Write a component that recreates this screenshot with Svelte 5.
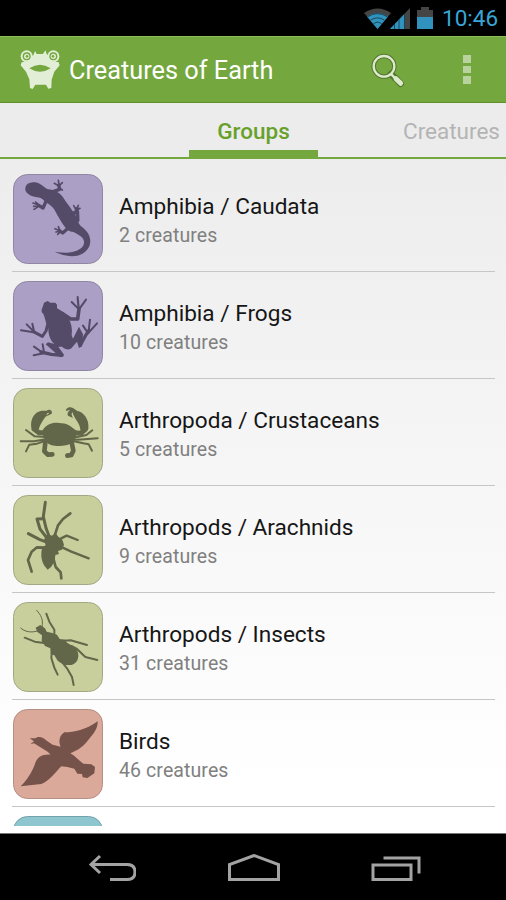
<script lang="ts">
  interface Limb {
    d: string
    w: number
  }

  interface Group {
    name?: string
    count?: number
    tint: 'violet' | 'olive' | 'coral' | 'teal'
    body: string
    limbs: Limb[]
  }

  const groups: Group[] = [
    {
      name: 'Amphibia / Caudata',
      count: 2,
      tint: 'violet',
      body: 'M52 57 C53 44 65 38 82 39 C97 41 107 54 120 60 C139 62 155 69 165 84 C174 99 190 117 202 138 C210 151 209 163 222 173 C242 188 251 207 245 228 C237 249 218 260 192 261 C174 260 157 255 140 247 C158 249 176 252 193 248 C217 243 230 231 228 216 C225 201 209 195 196 188 C184 186 175 181 168 169 C157 154 149 139 140 122 C132 108 117 103 106 92 C96 80 81 87 65 77 C55 71 51 65 52 57 Z',
      limbs: [
        { d: 'M137 66 L155 60 L152 47', w: 10 },
        { d: 'M154 51 L139 42 M153 46 L151 33 M153 50 L163 40 M157 58 L163 62', w: 5 },
        { d: 'M114 96 L105 116 L92 108', w: 10 },
        { d: 'M94 108 L75 101 M91 109 L77 111 M92 111 L78 120 M93 107 L83 98', w: 5 },
        { d: 'M194 134 L206 126 L206 118 M208 127 L209 153', w: 11 },
        { d: 'M205 123 L197 109 M207 120 L211 108 M207 122 L216 117', w: 5 },
        { d: 'M180 177 L164 191 L154 184', w: 10 },
        { d: 'M156 184 L141 178 M155 186 L144 188 M158 187 L149 195 M155 182 L151 172', w: 5 },
      ],
    },
    {
      name: 'Amphibia / Frogs',
      count: 10,
      tint: 'violet',
      body: 'M108 79 L119 74 L127 79 L142 79 L147 85 L147 96 C161 104 174 111 179 122 C190 138 194 157 191 177 L195 187 L213 151 L225 174 L222 210 L213 215 L207 196 L194 211 C187 223 173 221 162 211 L151 211 L168 235 L157 243 L113 204 L120 198 L139 203 C126 190 121 175 121 157 C114 145 113 130 106 112 C99 109 100 99 104 92 Z',
      limbs: [
        { d: 'M163 112 L188 128 L209 128 L213 98', w: 11 },
        { d: 'M213 104 L209 62 M213 99 L191 77 M213 99 L234 70 M211 88 L209 66', w: 6 },
        { d: 'M119 145 L114 164 L103 180 L76 166', w: 9 },
        { d: 'M80 168 L56 144 M78 164 L73 142 M77 168 L39 162', w: 6 },
        { d: 'M217 207 L233 177 L243 162', w: 10 },
        { d: 'M239 169 L225 148 M242 164 L246 130 M240 171 L267 141', w: 6 },
        { d: 'M162 237 L130 234 L99 227', w: 10 },
        { d: 'M108 231 L77 237 M105 230 L78 211 M108 228 L104 204', w: 6 },
      ],
    },
    {
      name: 'Arthropoda / Crustaceans',
      count: 5,
      tint: 'olive',
      body: 'M104 141 C116 122 133 117 153 119 C178 119 189 129 207 144 L203 163 L190 179 C179 190 127 192 119 179 L106 161 Z M70 134 C66 106 80 85 101 82 L116 82 C124 75 135 82 131 91 L105 104 C116 96 121 91 124 88 L118 89 C110 107 98 118 93 136 L84 146 Z M241 136 C245 107 224 84 208 83 L195 74 C184 67 172 76 174 83 L187 79 C179 85 177 91 180 97 L195 104 C190 95 190 90 193 86 C199 107 216 119 217 139 L229 145 Z',
      limbs: [
        { d: 'M78 137 L93 148 L115 148 M233 137 L218 150 L194 148', w: 15 },
        { d: 'M113 161 L80 159 L54 140 M112 168 L79 174 L38 174 M111 173 L87 181 L64 184 L54 204', w: 6 },
        { d: 'M194 164 L235 155 L253 141 M195 170 L230 168 L269 165 M194 173 L226 180 L242 183 L252 202', w: 6 },
        { d: 'M112 178 L109 204 L120 214 L133 213 M191 177 L196 202 L190 215 L178 217', w: 14 },
      ],
    },
    {
      name: 'Arthropods / Arachnids',
      count: 9,
      tint: 'olive',
      body: 'M108 148 L118 130 L131 136 L143 129 L151 139 L163 148 L168 163 L162 178 L150 182 L153 191 L142 194 L140 213 L130 229 L119 238 L109 226 C98 208 99 190 102 174 L113 164 Z',
      limbs: [
        { d: 'M125 142 L114 113 L106 79 L112 36', w: 9 },
        { d: 'M119 146 L96 116 L87 86 L106 85 M120 157 L94 147 L61 130', w: 9 },
        { d: 'M138 142 L150 105 L165 86 L187 69', w: 8 },
        { d: 'M152 148 L176 136 L209 149', w: 7 },
        { d: 'M156 168 L190 184 L242 204', w: 7 },
        { d: 'M114 172 L87 171 L71 184 L60 209 L71 244', w: 8 },
        { d: 'M136 204 L143 230 L158 246 L160 264', w: 8 },
      ],
    },
    {
      name: 'Arthropods / Insects',
      count: 31,
      tint: 'olive',
      body: 'M83 91 L97 83 L111 93 L116 103 L130 106 L147 112 L155 125 L170 127 L178 137 L189 143 C210 152 216 174 207 191 C195 210 165 205 149 190 L139 174 L128 170 L127 153 L111 146 L101 130 L102 114 L88 104 Z',
      limbs: [
        { d: 'M102 90 C107 66 98 52 86 39 M91 100 C70 108 49 103 38 92', w: 3 },
        { d: 'M139 116 L139 97 L124 73 L115 49 M114 138 L80 133 L50 121', w: 6 },
        { d: 'M164 130 L188 129 L237 143', w: 6 },
        { d: 'M132 159 L130 182 L139 211 L149 232', w: 6 },
        { d: 'M190 146 L207 155 L232 179 L268 188 M161 193 L177 213 L192 239 L197 263', w: 6 },
      ],
    },
    {
      name: 'Birds',
      count: 46,
      tint: 'coral',
      body: 'M65 102 L82 102 C91 94 107 99 114 108 L134 121 L158 127 C150 112 155 92 169 84 C200 84 232 77 269 51 C270 77 251 93 236 113 C222 130 207 138 187 147 C202 155 212 168 226 178 L250 180 L261 188 L259 207 L238 221 L224 219 L222 209 L208 208 L199 193 L178 188 L160 186 C144 201 126 229 100 239 L38 246 C57 226 70 207 80 181 C87 158 102 149 128 151 L119 142 L90 124 L78 117 L67 120 L78 111 Z',
      limbs: [],
    },
    { tint: 'teal', body: '', limbs: [] },
  ]
</script>

<div class="screen">
  <div class="status-bar">
    <svg class="wifi" width="27" height="21" viewBox="0 0 27 21">
      <path class="dim" d="M0 5 Q13.500 -4 27 5 L13.500 21 Z" />
      <path class="lit" d="M3 8.500 Q13.500 2 24 8.500 L13.500 21 Z" />
      <path class="wave" d="M3.500 8.800 Q13.500 2.500 23.500 8.800 M6.500 12.200 Q13.500 7.500 20.500 12.200 M9.500 15.500 Q13.500 12.500 17.500 15.500" />
    </svg>
    <svg class="signal" width="20" height="21" viewBox="0 0 20 21">
      <path class="dim" d="M0 21 L20 0 V21 Z" />
      <path class="lit" d="M0 21 L14.500 5.800 V21 Z" />
      <path class="bars" d="M4.500 21 V16 M9 21 V11 M14.500 21 V6" />
    </svg>
    <svg class="battery" width="16" height="22" viewBox="0 0 16 22">
      <path class="dim" d="M0 3 H4 V0 H12 V3 H16 V10 H0 Z" />
      <path class="lit" d="M0 10 H16 V22 H0 Z" />
    </svg>
    <span class="clock">10:46</span>
  </div>

  <header class="action-bar">
    <svg class="logo" width="42" height="40" viewBox="0 0 126 120">
      <path d="M21 37 L43 19 L48 6 L53 15 L72 15 L79 4 L83 15 L103 37 L119 40 L122 49 L106 68 L98 92 L97 117 L88 119 L81 107 H49 L41 120 L33 117 L31 91 L21 68 L5 49 L8 40 Z" />
      <circle cx="23" cy="22" r="18" />
      <circle cx="103" cy="22" r="18" />
      <g class="eyes">
        <circle cx="23" cy="22" r="12" />
        <circle cx="103" cy="22" r="12" />
        <path d="M31 58 Q63 36 95 58 Q63 79 31 58 Z" />
      </g>
      <circle cx="23" cy="22" r="8" />
      <circle cx="103" cy="22" r="8" />
      <circle class="pupil" cx="24" cy="22" r="4" />
      <circle class="pupil" cx="102" cy="22" r="4" />
    </svg>
    <h1>Creatures of Earth</h1>
    <svg class="search" width="36" height="36" viewBox="0 0 108 108">
      <g class="edge">
        <circle cx="42" cy="43" r="31" />
        <path d="M63 66 L77 80 M77 79 L92 95" />
      </g>
      <g class="glass">
        <circle cx="42" cy="43" r="31" />
        <path d="M64 67 L76 79" />
        <path class="handle" d="M78 80 L92 94" />
      </g>
    </svg>
    <div class="overflow">
      <i></i><i></i><i></i>
    </div>
  </header>

  <nav class="tabs">
    <span class="tab active">Groups</span>
    <span class="tab next">Creatures</span>
  </nav>

  <main class="list">
    {#each groups as group}
      <div class="row">
        <svg class="tile {group.tint}" width="90" height="90" viewBox="15 14 270 270">
          <rect class="plate" x="16.500" y="15.500" width="267" height="267" rx="42" />
          <path class="body" d={group.body} />
          {#each group.limbs as limb}
            <path class="limb" d={limb.d} stroke-width={limb.w} />
          {/each}
        </svg>
        {#if group.name}
          <div class="text">
            <span class="name">{group.name}</span>
            <span class="count">{group.count} creatures</span>
          </div>
        {/if}
      </div>
    {/each}
  </main>

  <footer class="nav-bar">
    <svg width="48" height="28" viewBox="0 0 48 28">
      <path d="M12 2 L3 10.500 L12 19 M3 10.500 H39 Q47 10.500 47 18 Q47 25.500 39 25.500 H22" />
    </svg>
    <svg width="54" height="28" viewBox="0 0 54 28">
      <path d="M2.500 25.500 V10.500 L27 1.500 L51.500 10.500 V25.500 Z" />
    </svg>
    <svg width="50" height="28" viewBox="0 0 50 28">
      <path d="M2 11 H40 V25.500 H2 Z M12.500 4 H48 V19.500" />
    </svg>
  </footer>
</div>

<style>
  :global(body) {
    background: #000;
  }

  .screen {
    width: 506px;
    height: 900px;
    display: flex;
    flex-direction: column;
    overflow: hidden;
    background: linear-gradient(#ebebeb 100px, #fff 780px);
    font-family: Roboto, sans-serif;
  }

  .status-bar {
    height: 36px;
    flex-shrink: 0;
    box-sizing: border-box;
    display: flex;
    align-items: flex-start;
    justify-content: flex-end;
    padding: 7px 8px 0 0;
    background: #000;
  }

  .wifi {
    margin-top: 1px;
  }

  .signal {
    margin: 1px 7px 0 -1px;
  }

  .dim {
    fill: #454545;
  }

  .lit {
    fill: #3092bd;
  }

  .wave,
  .bars {
    fill: none;
    stroke: #17465a;
    stroke-width: 1;
  }

  .clock {
    width: 56px;
    margin-left: 9px;
    color: #38a6d6;
    font-size: 22.5px;
    line-height: 23px;
    white-space: nowrap;
  }

  .action-bar {
    height: 67px;
    flex-shrink: 0;
    box-sizing: border-box;
    display: flex;
    align-items: center;
    padding: 0 33px 0 19px;
    background: #74a73e;
    border-top: 1px solid #8bbd58;
    border-bottom: 1px solid #5f9128;
  }

  .logo {
    margin-bottom: 2px;
    fill: #e3eed7;
  }

  .eyes,
  .pupil {
    fill: #74a73e;
  }

  h1 {
    flex: 1;
    margin: 2px 0 0 8px;
    color: #fff;
    font-size: 25.3px;
    font-weight: 400;
    line-height: 30px;
    white-space: nowrap;
  }

  .search {
    fill: none;
    stroke-linecap: round;
    margin-right: 57px;
  }

  .edge {
    stroke: #54752f;
    stroke-width: 13;
  }

  .edge path {
    stroke-width: 20;
  }

  .glass {
    stroke: #dcebcb;
    stroke-width: 7;
  }

  .glass .handle {
    stroke-width: 15;
  }

  .overflow {
    display: flex;
    flex-direction: column;
    gap: 3px;
    width: 9px;
    padding-right: 1px;
  }

  .overflow i {
    width: 8px;
    height: 7.5px;
    background: #b9d39e;
  }

  .tabs {
    height: 56px;
    flex-shrink: 0;
    box-sizing: border-box;
    display: grid;
    grid-template-columns: 189px 129px 188px;
    border-bottom: 2px solid #74a73e;
    background: #ececec;
    font-size: 22.5px;
    line-height: 56px;
  }

  .tab {
    height: 54px;
    box-sizing: border-box;
    text-align: center;
  }

  .active {
    grid-column: 2;
    color: #67a02a;
    font-weight: 500;
    border-bottom: 7px solid #74a73e;
  }

  .next {
    text-align: right;
    padding-right: 6px;
    color: #b4b4b4;
  }

  .list {
    height: 667px;
    flex-shrink: 0;
    box-sizing: border-box;
    overflow: hidden;
    padding: 6.500px 11px 0 12px;
  }

  .row {
    height: 106.900px;
    box-sizing: border-box;
    display: flex;
    padding: 8.8px 0 0 1px;
    border-bottom: 1.500px solid #c6c6c6;
  }

  .tile {
    flex-shrink: 0;
  }

  .plate {
    stroke-width: 3;
  }

  .body {
    stroke: none;
  }

  .limb {
    fill: none;
    stroke-linecap: round;
    stroke-linejoin: round;
  }

  .violet .plate {
    fill: #ab9fc6;
    stroke: #8f86a3;
  }

  .violet .body {
    fill: #544b68;
  }

  .violet .limb {
    stroke: #544b68;
  }

  .olive .plate {
    fill: #c8cf9c;
    stroke: #a3a884;
  }

  .olive .body {
    fill: #62674a;
  }

  .olive .limb {
    stroke: #62674a;
  }

  .coral .plate {
    fill: #dba999;
    stroke: #b38f84;
  }

  .coral .body {
    fill: #76534a;
  }

  .teal .plate {
    fill: #8ec6cf;
    stroke: #74a2aa;
  }

  .text {
    display: flex;
    flex-direction: column;
    margin: 18.8px 0 0 16px;
    white-space: nowrap;
  }

  .name {
    color: #161616;
    font-size: 22.6px;
    line-height: 28px;
  }

  .count {
    color: #808080;
    font-size: 19.5px;
    line-height: 29px;
    letter-spacing: 0.1px;
  }

  .nav-bar {
    flex: 1;
    display: flex;
    justify-content: space-between;
    align-items: flex-start;
    box-sizing: border-box;
    margin-top: 7px;
    padding: 20px 85px 0 88px;
    background: #000;
    border-top: 1px solid #777;
  }

  .nav-bar path {
    fill: none;
    stroke: #a3a3a3;
    stroke-width: 3;
  }
</style>
